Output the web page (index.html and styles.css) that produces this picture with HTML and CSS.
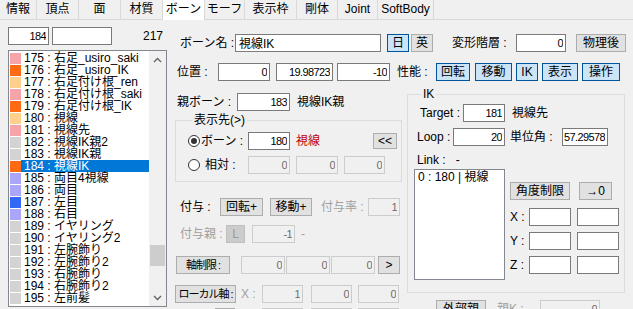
FILE: index.html
```html
<!DOCTYPE html>
<html lang="ja">
<head>
  <meta charset="UTF-8" />
  <meta name="viewport" content="width=device-width, initial-scale=1.0" />
  <title>PMXエディタ - ボーン</title>
  <link rel="stylesheet" href="styles.css">
</head>
<body>
  <div class="tabs">
    <div class="tab t37">情報</div>
    <div class="tab t42">頂点</div>
    <div class="tab t42">面</div>
    <div class="tab t42">材質</div>
    <div class="tab t42 active">ボーン</div>
    <div class="tab t40">モーフ</div>
    <div class="tab t52">表示枠</div>
    <div class="tab t41">剛体</div>
    <div class="tab t40">Joint</div>
    <div class="tab t56">SoftBody</div>
  </div>

  <div class="page">
    <!-- bone list -->
    <div class="side">
      <div class="side-top">
        <input class="box w41" value="184">
        <input class="box w60" value="">
        <span class="count">217</span>
      </div>
      <div class="bone-list">
        <ul>
          <li><i class="sw pink"></i><span>175 : 右足_usiro_saki</span></li>
          <li><i class="sw orange"></i><span>176 : 右足_usiro_IK</span></li>
          <li><i class="sw peach"></i><span>177 : 右足付け根_ren</span></li>
          <li><i class="sw pink"></i><span>178 : 右足付け根_saki</span></li>
          <li><i class="sw orange"></i><span>179 : 右足付け根_IK</span></li>
          <li><i class="sw peach"></i><span>180 : 視線</span></li>
          <li><i class="sw pink"></i><span>181 : 視線先</span></li>
          <li><i class="sw gray"></i><span>182 : 視線IK親2</span></li>
          <li><i class="sw gray"></i><span>183 : 視線IK親</span></li>
          <li class="selected"><i class="sw orange"></i><span>184 : 視線IK</span></li>
          <li><i class="sw lavender"></i><span>185 : 両目4視線</span></li>
          <li><i class="sw lavender"></i><span>186 : 両目</span></li>
          <li><i class="sw blue"></i><span>187 : 左目</span></li>
          <li><i class="sw lavender"></i><span>188 : 右目</span></li>
          <li><i class="sw gray"></i><span>189 : イヤリング</span></li>
          <li><i class="sw gray"></i><span>190 : イヤリング2</span></li>
          <li><i class="sw gray"></i><span>191 : 左腕飾り</span></li>
          <li><i class="sw gray"></i><span>192 : 左腕飾り2</span></li>
          <li><i class="sw gray"></i><span>193 : 右腕飾り</span></li>
          <li><i class="sw gray"></i><span>194 : 右腕飾り2</span></li>
          <li><i class="sw gray"></i><span>195 : 左前髪</span></li>
        </ul>
        <div class="vscroll">
          <div class="arrow"><svg width="9" height="6" viewBox="0 0 9 6"><path d="M1 5 L4.5 1.5 L8 5" fill="none" stroke="#606060" stroke-width="1.3"/></svg></div>
          <div class="track"><div class="thumb"></div></div>
          <div class="arrow"><svg width="9" height="6" viewBox="0 0 9 6"><path d="M1 1 L4.5 4.5 L8 1" fill="none" stroke="#606060" stroke-width="1.3"/></svg></div>
        </div>
      </div>
    </div>

    <!-- bone properties -->
    <div class="form">
      <div class="row row-name">
        <span class="lbl lw55 ml5">ボーン名 :</span>
        <input class="box left w146" value="視線IK">
        <button class="btn toggle w22 ml6">日</button>
        <button class="btn w22 ml2">英</button>
        <span class="lbl lw64 ml19">変形階層 :</span>
        <input class="box w50" value="0">
        <button class="btn w50 ml10">物理後</button>
      </div>

      <div class="row row-pos">
        <span class="lbl lw41 ml2">位置 :</span>
        <input class="box w52" value="0">
        <input class="box w57 ml6" value="19.98723">
        <input class="box w53 ml4" value="-10">
        <span class="lbl lw39 ml7">性能 :</span>
        <button class="btn toggle w34">回転</button>
        <button class="btn toggle w37 ml5">移動</button>
        <button class="btn toggle w22 ml4">IK</button>
        <button class="btn toggle w36 ml4">表示</button>
        <button class="btn toggle w38 ml4">操作</button>
      </div>

      <div class="cols">
        <div class="col-left">
          <div class="row row-parent">
            <span class="lbl lw60 ml2">親ボーン :</span>
            <input class="box w53" value="183">
            <span class="ml7">視線IK親</span>
          </div>

          <fieldset class="group dest">
            <legend>表示先(&gt;)</legend>
            <div class="row">
              <i class="radio checked"></i>
              <span class="lbl lw47">ボーン :</span>
              <input class="box w42" value="180">
              <span class="ml6 red">視線</span>
              <button class="btn small w24 push">&lt;&lt;</button>
            </div>
            <div class="row mt6">
              <i class="radio"></i>
              <span class="lbl lw47 pl4">相対 :</span>
              <input class="box off w42" value="0">
              <input class="box off w42 ml6" value="0">
              <input class="box off w41 ml6" value="0">
            </div>
          </fieldset>

          <div class="row row-grant">
            <span class="lbl lw40 ml5">付与 :</span>
            <button class="btn w43">回転+</button>
            <button class="btn w42 ml7">移動+</button>
            <span class="lbl lw47 ml9 dim">付与率 :</span>
            <input class="box off w32" value="1">
          </div>

          <div class="row row-grant-parent">
            <span class="lbl lw46 ml5 dim">付与親 :</span>
            <button class="btn disabled w19">L</button>
            <input class="box off w43 ml7" value="-1">
            <span class="ml6 dim">-</span>
          </div>

          <div class="row row-axis">
            <button class="btn tight w54 ml1">軸制限 :</button>
            <input class="box off w44 ml11" value="0">
            <input class="box off w44 ml1" value="0">
            <input class="box off w44 ml1" value="0">
            <button class="btn w22 ml3">&gt;</button>
          </div>

          <div class="row row-local">
            <button class="btn tight w61">ローカル軸 :</button>
            <span class="lbl lw21 ml5 dim">X :</span>
            <input class="box off w41" value="1">
            <input class="box off w41 ml8" value="0">
            <input class="box off w41 ml6" value="0">
          </div>

          <div class="row row-local-z">
            <button class="btn w20 ml40"></button>
            <input class="box off w41 ml27" value="">
            <input class="box off w41 ml8" value="">
            <input class="box off w41 ml6" value="">
          </div>
        </div>

        <div class="col-right">
          <fieldset class="group ik">
            <legend>IK</legend>
            <div class="row">
              <span class="lbl lw43 ml3">Target :</span>
              <input class="box w42" value="181">
              <span class="ml7">視線先</span>
            </div>
            <div class="row mt6">
              <span class="lbl lw36">Loop :</span>
              <input class="box w52" value="20">
              <span class="lbl lw52 ml5">単位角 :</span>
              <input class="box w46" value="57.29578">
            </div>
            <div class="link-label">Link :&nbsp;&nbsp; -</div>
            <div class="link-area">
              <div class="link-list">0 : 180 | 視線</div>
              <div class="limits">
                <div class="row">
                  <button class="btn w60">角度制限</button>
                  <button class="btn w33 ml9">→0</button>
                </div>
                <div class="row mt8">
                  <span class="lbl lw19">X :</span>
                  <input class="box w42" value="">
                  <input class="box w42 ml6" value="">
                </div>
                <div class="row mt6">
                  <span class="lbl lw19">Y :</span>
                  <input class="box w42" value="">
                  <input class="box w42 ml6" value="">
                </div>
                <div class="row mt6">
                  <span class="lbl lw19">Z :</span>
                  <input class="box w42" value="">
                  <input class="box w42 ml6" value="">
                </div>
              </div>
            </div>
          </fieldset>

          <div class="row row-outer">
            <button class="btn w50 ml29">外部親</button>
            <span class="lbl lw43 ml11 dim">親K :</span>
            <input class="box off w60" value="0">
          </div>
        </div>
      </div>
    </div>
  </div>
</body>
</html>
```

FILE: styles.css
```css
html, body {
  margin: 0;
  padding: 0;
}
body {
  width: 633px;
  height: 309px;
  overflow: hidden;
  background: #f0f0f0;
  color: #000;
  font-family: 'Liberation Sans', 'Noto Sans CJK JP', sans-serif;
  font-size: 12px;
  line-height: 14px;
}

/* tabs */
.tabs {
  display: flex;
  height: 20px;
  box-sizing: border-box;
  border-bottom: 1px solid #d9d9d9;
}
.tab {
  box-sizing: border-box;
  text-align: center;
  line-height: 19px;
  border-right: 1px solid #d9d9d9;
}
.tab.active {
  background: #fff;
  height: 20px;
}
.t37 { width: 37px; }
.t40 { width: 40px; }
.t41 { width: 41px; }
.t42 { width: 42px; }
.t52 { width: 52px; }
.t56 { width: 56px; }

.page {
  display: flex;
  height: 289px;
  overflow: hidden;
}

/* left side */
.side {
  margin-left: 8px;
  width: 159px;
}
.side-top {
  display: flex;
  align-items: center;
  gap: 3px;
  margin-top: 7px;
  height: 18px;
}
.count {
  margin-left: auto;
  margin-right: 4px;
}
.bone-list {
  display: flex;
  margin-top: 5px;
  height: 257px;
  box-sizing: border-box;
  border: 1px solid #828790;
  background: #fff;
}
.bone-list ul {
  list-style: none;
  margin: 0;
  padding: 1px 0 0;
  flex: 1;
}
.bone-list li {
  display: flex;
  align-items: center;
  height: 12px;
  white-space: nowrap;
}
.bone-list li span {
  flex: 1;
  padding-left: 3px;
  line-height: 12px;
}
.bone-list li.selected span {
  background: #0078d7;
  color: #fff;
}
.sw {
  width: 11px;
  height: 11px;
  margin-left: 1px;
}
.pink { background: #f6a3a9; }
.orange { background: #ff6a13; }
.peach { background: #ffd08b; }
.gray { background: #d3d3d3; }
.lavender { background: #aca6fa; }
.blue { background: #3168f5; }

.vscroll {
  width: 17px;
  display: flex;
  flex-direction: column;
  background: #f0f0f0;
}
.arrow {
  height: 17px;
  display: flex;
  align-items: center;
  justify-content: center;
}
.track {
  flex: 1;
}
.thumb {
  margin: 177px 1px 0;
  height: 21px;
  background: #cdcdcd;
}

/* form */
.form {
  margin-left: 8px;
  flex: 1;
}
.row {
  display: flex;
  align-items: center;
  height: 18px;
  white-space: nowrap;
}
.row-name {
  margin-top: 13px;
  height: 19px;
}
.row-pos {
  margin-top: 11px;
}
.cols {
  display: flex;
  margin-top: 6px;
}
.col-left {
  width: 227px;
}
.col-right {
  margin-left: 5px;
  width: 218px;
}
.row-parent { margin-top: 6px; }
.row-grant { margin-top: 16px; }
.row-grant-parent { margin-top: 9px; }
.row-axis { margin-top: 13px; }
.row-local { margin-top: 10px; height: 20px; }
.row-local-z { margin-top: 4px; }
.row-outer { margin-top: 7px; }

.lbl {
  display: inline-block;
  flex: none;
}
.dim { color: #a0a0a0; }
.red { color: #c00000; }

.box {
  height: 18px;
  box-sizing: border-box;
  margin: 0;
  padding: 0 2px 0 0;
  border: 1px solid #7a7a7a;
  background: #fff;
  font-family: 'Liberation Sans', 'Noto Sans CJK JP', sans-serif;
  font-size: 11px;
  letter-spacing: -0.6px;
  color: #000;
  text-align: right;
  flex: none;
}
.box.left {
  padding: 0 3px;
  text-align: left;
  font-size: 12px;
  letter-spacing: 0;
}
.box.off {
  border-color: #cccccc;
  background: #f0f0f0;
  color: #6d6d6d;
}

.btn {
  height: 18px;
  box-sizing: border-box;
  margin: 0;
  padding: 0;
  border: 1px solid #adadad;
  background: #e1e1e1;
  font: inherit;
  color: #000;
  flex: none;
  overflow: hidden;
}
.btn.toggle {
  background: #cce4f7;
  border-color: #005499;
}
.btn.tight {
  font-size: 11px;
  letter-spacing: -1px;
}
.btn.small { height: 16px; }
.btn.disabled {
  background: #cccccc;
  border-color: #bfbfbf;
  color: #9a9a9a;
}
.push {
  margin-left: auto;
  margin-right: 4px;
}

/* group boxes */
.group {
  margin: 0;
  padding: 0;
  border: 1px solid #dcdcdc;
  min-width: 0;
}
.group legend {
  padding: 0 2px;
  margin-left: 4px;
  line-height: 14px;
}
.dest {
  margin-top: 2px;
  padding: 5px 0 7px 12px;
}
.radio {
  width: 12px;
  height: 12px;
  box-sizing: border-box;
  border: 1px solid #333;
  border-radius: 50%;
  background: #fff;
  margin-right: 1px;
  position: relative;
  flex: none;
}
.radio.checked::after {
  content: '';
  position: absolute;
  left: 2px;
  top: 2px;
  width: 6px;
  height: 6px;
  border-radius: 50%;
  background: #333;
}
.pl4 { padding-left: 4px; box-sizing: border-box; }

.ik {
  padding: 3px 0 12px 9px;
  height: 206px;
  box-sizing: border-box;
}
.link-label {
  margin-top: 8px;
  line-height: 12px;
}
.link-area {
  display: flex;
  margin-top: 3px;
}
.link-list {
  margin-left: -3px;
  width: 91px;
  height: 111px;
  box-sizing: border-box;
  border: 1px solid #828790;
  background: #fff;
  padding: 1px 3px;
  line-height: 12px;
}
.limits {
  margin-left: 5px;
  padding-top: 13px;
}

/* width helpers */
.w19 { width: 19px; }
.w20 { width: 20px; }
.w22 { width: 22px; }
.w24 { width: 24px; }
.w32 { width: 32px; }
.w33 { width: 33px; }
.w34 { width: 34px; }
.w36 { width: 36px; }
.w37 { width: 37px; }
.w38 { width: 38px; }
.w41 { width: 41px; }
.w42 { width: 42px; }
.w43 { width: 43px; }
.w44 { width: 44px; }
.w46 { width: 46px; }
.w50 { width: 50px; }
.w52 { width: 52px; }
.w53 { width: 53px; }
.w54 { width: 54px; }
.w57 { width: 57px; }
.w60 { width: 60px; }
.w61 { width: 61px; }
.w146 { width: 146px; }

.lw19 { width: 19px; }
.lw21 { width: 21px; }
.lw36 { width: 36px; }
.lw39 { width: 39px; }
.lw40 { width: 40px; }
.lw41 { width: 41px; }
.lw43 { width: 43px; }
.lw46 { width: 46px; }
.lw47 { width: 47px; }
.lw52 { width: 52px; }
.lw55 { width: 55px; }
.lw60 { width: 60px; }
.lw64 { width: 64px; }

.ml1 { margin-left: 1px; }
.ml2 { margin-left: 2px; }
.ml3 { margin-left: 3px; }
.ml4 { margin-left: 4px; }
.ml5 { margin-left: 5px; }
.ml6 { margin-left: 6px; }
.ml7 { margin-left: 7px; }
.ml8 { margin-left: 8px; }
.ml9 { margin-left: 9px; }
.ml10 { margin-left: 10px; }
.ml11 { margin-left: 11px; }
.ml19 { margin-left: 19px; }
.ml27 { margin-left: 27px; }
.ml29 { margin-left: 29px; }
.ml40 { margin-left: 40px; }
.mt6 { margin-top: 6px; }
.mt8 { margin-top: 8px; }
```
